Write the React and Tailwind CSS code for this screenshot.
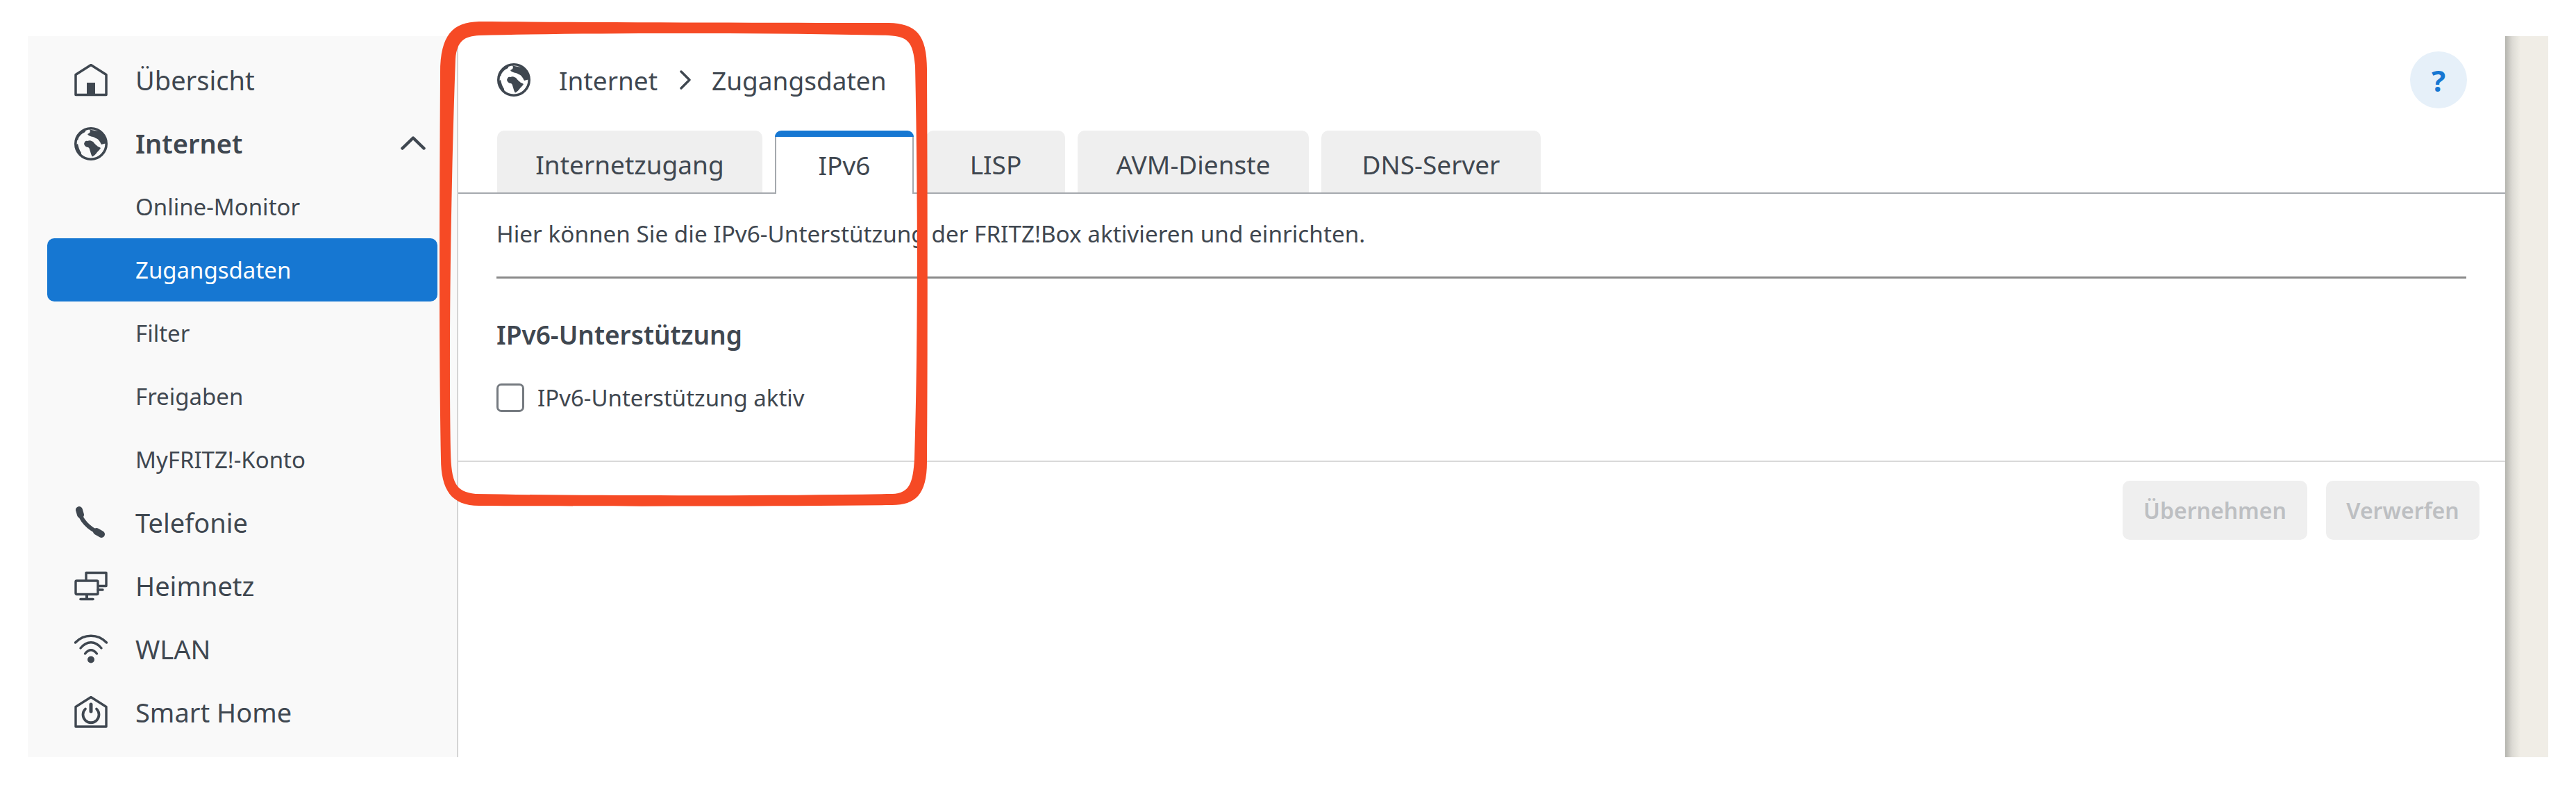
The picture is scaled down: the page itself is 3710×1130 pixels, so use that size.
const Home = () => (
  <svg width="48" height="48" viewBox="0 0 48 48" fill="none" stroke="#3f4750" strokeWidth="3.5" strokeLinejoin="round">
    <path d="M2 44.5V15.5L24 1.5L46 15.5V44.5Z" />
    <rect x="18" y="27" width="12" height="18" fill="#3f4750" stroke="none" />
  </svg>
);
const Globe = () => (
  <svg width="48" height="48" viewBox="0 0 48 48" fill="#3f4750">
    <circle cx="24" cy="24" r="22.2" fill="none" stroke="#3f4750" strokeWidth="3.6" />
    <path d="M22 3C29 6 36 4 42 10L47 23L39 25C37 21 35 17 31 16C27 13 21 14 19 10C22 9 24 7 22 3Z" />
    <path d="M14 24C15 21 16 19 19 20C23 18 25 20 27 21C29 24 32 26 34 28C36 29 37 29 38 30C37 32 35 34 33 36C31 39 29 41 26 42.500C24.500 41 24 38 23 35C22 32 22 30 20 29C18 29 15 28 14 24Z" />
    <path d="M3 18C4 12 9 7 16 4C17 6 15 8 12 9C9 11 6 14 5 19Z" />
    <path d="M2 26L5 24C6 28 7 33 10 37L10 41C5 37 3 32 2 26Z" />
  </svg>
);
const Phone = () => (
  <svg width="48" height="48" viewBox="0 0 48 48" fill="none" stroke="#3f4750" strokeLinecap="round">
    <path d="M8 7C8 18 20 32 38 39" strokeWidth="6" />
    <path d="M7 5L9 12" strokeWidth="10" />
    <path d="M32 36L39 40" strokeWidth="10" />
  </svg>
);
const Net = () => (
  <svg width="48" height="48" viewBox="0 0 48 48" fill="none" stroke="#3f4750" strokeWidth="3.4" strokeLinejoin="round" strokeLinecap="round">
    <path d="M17 14V4.500H46V23.500H36" />
    <rect x="2" y="16" width="32" height="19.500" rx="1.500" />
    <path d="M34 29H41" />
    <path d="M18 36V42" strokeWidth="4" />
    <path d="M9 42.500H27" strokeWidth="3.6" />
  </svg>
);
const Wifi = () => (
  <svg width="48" height="48" viewBox="0 0 48 48" fill="none" stroke="#3f4750" strokeWidth="3.4" strokeLinecap="round">
    <path d="M1.500 14C14 1 34 1 46.500 14" />
    <path d="M9 22C18 11 30 11 39 22" />
    <path d="M15.500 30C21 23 27 23 32.500 30" />
    <circle cx="24" cy="38.500" r="5" fill="#3f4750" stroke="none" />
  </svg>
);
const SmartHome = () => (
  <svg width="48" height="48" viewBox="0 0 48 48" fill="none" stroke="#3f4750" strokeWidth="3.4" strokeLinejoin="round" strokeLinecap="round">
    <path d="M2 44V15.500L24 1.500L46 15.500V44Z" />
    <path d="M16 18.500A11.500 11.500 0 1 0 32 18.500" strokeWidth="3.8" />
    <path d="M24 12V22" strokeWidth="5" />
  </svg>
);

const Main = ({ icon, label, bold, chevron }) => (
  <div className="relative flex h-[91px] items-center pl-[67px]">
    <span className="flex w-[88px] shrink-0">{icon}</span>
    <span className={"text-[38px] " + (bold ? "font-semibold" : "")}>{label}</span>
    {chevron && (
      <svg className="absolute left-[537px] top-[35px]" width="36" height="20" viewBox="0 0 36 20" fill="none" stroke="#3f4750" strokeWidth="4.5" strokeLinecap="round" strokeLinejoin="round">
        <path d="M2.500 17.500L18 2.500L33.500 17.500" />
      </svg>
    )}
  </div>
);

const Sub = ({ label, active }) => (
  <div className={"mx-[28px] flex h-[91px] items-center rounded-[10px] pl-[127px] text-[33px] " + (active ? "bg-[#1677d2] text-white" : "")}>
    {label}
  </div>
);

const Tab = ({ label, width, active }) =>
  active ? (
    <div className={"relative z-10 -mb-[2px] flex h-[91px] flex-col rounded-t-[10px] bg-white " + width}>
      <div className="h-[9px] rounded-t-[10px] bg-[#1677d2]" />
      <div className="flex flex-1 items-center justify-center border-x-2 border-[#a5a9ae] text-[37px]">{label}</div>
    </div>
  ) : (
    <div className={"flex h-[89px] items-center justify-center rounded-t-[10px] bg-[#efefef] pt-[9px] text-[37px] " + width}>
      {label}
    </div>
  );

export default function App() {
  return (
    <div className="relative h-[1130px] w-[3710px] overflow-hidden bg-white font-['Noto_Sans','Liberation_Sans',sans-serif] text-[#3f4750]">
      <div className="flex h-[1090px] pl-[40px] pt-[52px]">
        <nav className="w-[618px] shrink-0 bg-[#f9f9f9] pt-[18px]">
          <Main icon={<Home />} label="Übersicht" />
          <Main icon={<Globe />} label="Internet" bold chevron />
          <Sub label="Online-Monitor" />
          <Sub label="Zugangsdaten" active />
          <Sub label="Filter" />
          <Sub label="Freigaben" />
          <Sub label="MyFRITZ!-Konto" />
          <Main icon={<Phone />} label="Telefonie" />
          <Main icon={<Net />} label="Heimnetz" />
          <Main icon={<Wifi />} label="WLAN" />
          <Main icon={<SmartHome />} label="Smart Home" />
        </nav>

        <main className="flex w-[2950px] shrink-0 flex-col border-l-2 border-[#d5d5d5]">
          <header className="mb-[10px] flex h-[126px] items-center pl-[56px] pr-[55px]">
            <Globe />
            <span className="ml-[41px] pt-[2px] text-[37px]">Internet</span>
            <svg className="ml-[32px]" width="16" height="28" viewBox="0 0 16 28" fill="none" stroke="#3f4750" strokeWidth="3.4" strokeLinecap="round" strokeLinejoin="round">
              <path d="M2 2L14 14L2 26" />
            </svg>
            <span className="ml-[30px] pt-[2px] text-[37px]">Zugangsdaten</span>
            <div className="ml-auto flex h-[82px] w-[82px] items-center justify-center rounded-full bg-[#e6f0f9] text-[42px] font-bold text-[#1677d2]">?</div>
          </header>

          <div className="flex gap-[18px] border-b-2 border-[#a5a9ae] pl-[56px]">
            <Tab label="Internetzugang" width="w-[382px]" />
            <Tab label="IPv6" width="w-[200px]" active />
            <Tab label="LISP" width="w-[200px]" />
            <Tab label="AVM-Dienste" width="w-[333px]" />
            <Tab label="DNS-Server" width="w-[316px]" />
          </div>

          <section className="pl-[55px] pr-[56px]">
            <p className="flex h-[122px] items-center border-b-[3px] border-[#8a8a8a] pb-[3px] text-[33.300px]">
              Hier können Sie die IPv6-Unterstützung der FRITZ!Box aktivieren und einrichten.
            </p>
            <h2 className="mt-[59px] text-[37px] leading-[44px] font-semibold">IPv6-Unterstützung</h2>
            <label className="mt-[48px] flex items-center gap-[19px] text-[33px] leading-[41px]">
              <span className="h-[41px] w-[40px] rounded-[7px] border-[3px] border-[#757a80] bg-white" />
              IPv6-Unterstützung aktiv
            </label>
          </section>

          <div className="mt-[70px] flex justify-end gap-[27px] border-t-2 border-[#d9d9d9] pr-[37px] pt-[27px]">
            <div className="flex h-[85px] w-[266px] items-center justify-center rounded-[10px] bg-[#efefef] text-[32px] font-semibold text-[#bdbfc2]">Übernehmen</div>
            <div className="flex h-[85px] w-[221px] items-center justify-center rounded-[10px] bg-[#efefef] text-[32px] font-semibold text-[#bdbfc2]">Verwerfen</div>
          </div>
        </main>

        <div className="w-[62px] shrink-0 bg-[linear-gradient(90deg,#b4b4ae_0px,#dcdad4_10px,#e6e4dd_16px,#f0ede6_22px)]" />
      </div>

      <svg className="pointer-events-none absolute left-0 top-0 z-20" width="3710" height="1130" viewBox="0 0 3710 1130">
        <path
          fill="#f64a25"
          fillRule="evenodd"
          d="M690 31C850 32 1100 33 1280 33C1320 34 1336 50 1335 105C1336 300 1336 520 1335 665C1335 712 1318 727 1285 727C1100 729 850 729 690 728C650 728 635 705 635 660C632 500 633 300 634 105C634 50 652 32 690 31ZM690 51C670 52 658 58 656 85C650 250 646 480 649 650C650 695 656 708 685 711C850 714 1100 714 1285 711C1310 710 1315 695 1317 660C1322 500 1322 280 1318 95C1315 60 1308 53 1280 51C1100 47 850 47 690 51Z"
        />
      </svg>
    </div>
  );
}
